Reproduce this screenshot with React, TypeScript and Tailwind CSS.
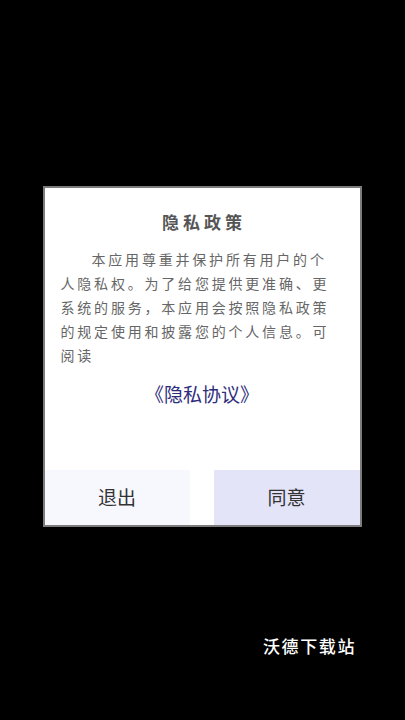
import React from 'react';

const cjk = { fontFamily: '"Noto Sans CJK SC", "Noto Sans", sans-serif' };

const PrivacyDialog: React.FC = () => {
  return (
    <div className="w-[319px] h-[341px] border-2 border-[#7c7c7c] bg-white flex flex-col">
      <h1 className="mt-[22px] text-center text-[17px] leading-[24px] font-bold tracking-[4px] text-[#555555] pl-[4px]">
        隐私政策
      </h1>
      <p className="mt-[13px] pl-[16px] w-[290px] text-[14px] leading-[24px] tracking-[2.8px] text-[#666666] indent-[31px]">
        本应用尊重并保护所有用户的个人隐私权。为了给您提供更准确、更系统的服务，本应用会按照隐私政策的规定使用和披露您的个人信息。可阅读
      </p>
      <div className="mt-[15px] text-center text-[19px] leading-[24px] text-[#2e2d7c]">
        《隐私协议》
      </div>
      <div className="mt-auto flex justify-between h-[55px]">
        <button className="w-[145px] bg-[#f7f8fe] text-[19px] text-[#333333]">退出</button>
        <button className="w-[146px] bg-[#e3e4f8] text-[19px] text-[#333333]">同意</button>
      </div>
    </div>
  );
};

export default function App() {
  return (
    <div className="w-[405px] h-[720px] bg-black flex flex-col items-center overflow-hidden" style={cjk}>
      <div className="mt-[186px] pr-[1px]">
        <PrivacyDialog />
      </div>
      <div className="self-end mr-[49px] mt-[107px] text-[17px] leading-[24px] tracking-[1.6px] font-medium text-white">
        沃德下载站
      </div>
    </div>
  );
}
